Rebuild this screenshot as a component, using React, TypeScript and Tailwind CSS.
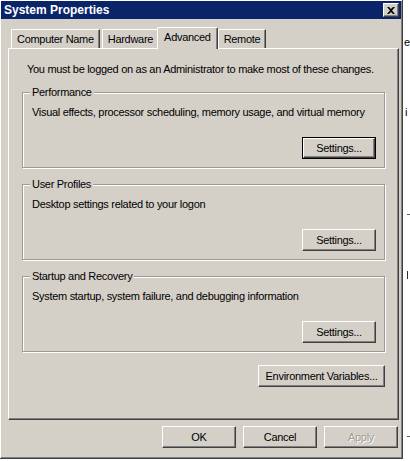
const font = "font-['Liberation_Sans',Arial,sans-serif]";

const groups = [
  { title: "Performance", text: "Visual effects, processor scheduling, memory usage, and virtual memory", focused: true },
  { title: "User Profiles", text: "Desktop settings related to your logon" },
  { title: "Startup and Recovery", text: "System startup, system failure, and debugging information" },
];

const tabs = ["Computer Name", "Hardware", "Advanced", "Remote"];

const Btn = ({
  children,
  className = "",
  focused,
  disabled,
}: {
  children: React.ReactNode;
  className?: string;
  focused?: boolean;
  disabled?: boolean;
}) => (
  <div className={`h-[22px] ${focused ? "border border-black" : ""} ${className}`}>
    <div
      className={`h-full w-full flex items-center justify-center bg-[#d4d0c8] border border-t-white border-l-white border-r-[#404040] border-b-[#404040] shadow-[inset_-1px_-1px_0_#808080] text-[11px] tracking-[-0.3px] whitespace-nowrap ${
        disabled ? "text-[#a09d96] [text-shadow:1px_1px_0_#fff]" : "text-black"
      }`}
    >
      {children}
    </div>
  </div>
);

const Group = ({ title, text, focused }: { title: string; text: string; focused?: boolean }) => (
  <div className="relative border border-[#9c9a94] shadow-[1px_1px_0_#fff,inset_1px_1px_0_#fff] pt-[12px] pb-[8px] pl-[9px] pr-[8px]">
    <span className="absolute left-[7px] top-[-8px] bg-[#d4d0c8] px-[2px] text-[11px] leading-[14px] tracking-[-0.3px]">{title}</span>
    <p className="text-[11px] leading-[14px] tracking-[-0.3px] whitespace-nowrap">{text}</p>
    <div className="flex justify-end mt-[18px]">
      <Btn className="w-[74px]" focused={focused}>
        Settings...
      </Btn>
    </div>
  </div>
);

export default function App() {
  return (
    <div className={`relative w-[410px] h-[461px] bg-white overflow-hidden text-black ${font}`}>
      <div className="w-[403px] h-[459px] bg-[#d4d0c8] border-r border-b border-r-[#404040] border-b-[#404040] shadow-[inset_1px_1px_0_#fff,inset_-1px_-1px_0_#808080] p-[1px] flex flex-col">
        {/* title bar */}
        <div className="h-[18px] bg-[#0a246a] flex items-center justify-between pl-[3px] pr-[2px]">
          <span className="text-white font-bold text-[12px] leading-none">System Properties</span>
          <div className="w-[16px] h-[14px] bg-[#d4d0c8] border border-t-white border-l-white border-r-[#404040] border-b-[#404040] shadow-[inset_-1px_-1px_0_#808080] flex items-center justify-center">
            <svg width="8" height="7" viewBox="0 0 8 7">
              <path d="M0 0h2l2 2 2-2h2L5 3.5 8 7H6L4 5 2 7H0l3-3.5z" fill="#000" />
            </svg>
          </div>
        </div>

        {/* tabs */}
        <div className="flex items-end pl-[8px] pt-[8px] h-[29px] relative z-10">
          {tabs.map((t) => {
            const sel = t === "Advanced";
            return (
              <div
                key={t}
                className={`border-t border-l border-t-white border-l-white border-r border-r-[#404040] shadow-[inset_-1px_0_0_#808080] flex items-center text-[11px] tracking-[-0.3px] whitespace-nowrap ${
                  sel ? "h-[22px] -mx-[2px] px-[6px] bg-[#d4d0c8] rounded-t-[2px] pb-[3px] mb-[-1px]" : "h-[19px] px-[5px] pt-[1px] ml-[2px]"
                }`}
              >
                {t}
              </div>
            );
          })}
        </div>

        {/* panel */}
        <div className="ml-[7px] w-[391px] h-[372px] border border-t-white border-l-white border-r-[#404040] border-b-[#404040] shadow-[inset_-1px_-1px_0_#808080] pt-[13px] px-[13px] flex flex-col">
          <p className="text-[11px] leading-[14px] tracking-[-0.3px] whitespace-nowrap pl-[5px]">
            You must be logged on as an Administrator to make most of these changes.
          </p>
          <div className="flex flex-col gap-[16px] mt-[16px]">
            {groups.map((g) => (
              <Group key={g.title} {...g} />
            ))}
          </div>
          <div className="flex justify-end mt-[13px]">
            <Btn className="w-[127px]">Environment Variables...</Btn>
          </div>
        </div>

        {/* bottom buttons */}
        <div className="flex justify-end gap-[7px] mt-[6px] pr-[3px]">
          <Btn className="w-[74px]">OK</Btn>
          <Btn className="w-[74px]">Cancel</Btn>
          <Btn className="w-[74px]" disabled>
            Apply
          </Btn>
        </div>
      </div>

      {/* background peeking out on the right */}
      <span className="absolute left-[404px] top-[35px] text-[11px] leading-[14px]">e</span>
      <span className="absolute left-[405px] top-[105px] text-[11px] leading-[14px]">i</span>
      <div className="absolute left-[407px] top-[214px] w-[3px] h-[1px] bg-[#606060]" />
      <div className="absolute left-[407px] top-[271px] w-[1px] h-[8px] bg-[#303030]" />
      <div className="absolute left-[407px] top-[436px] w-[3px] h-[1px] bg-[#606060]" />
    </div>
  );
}
